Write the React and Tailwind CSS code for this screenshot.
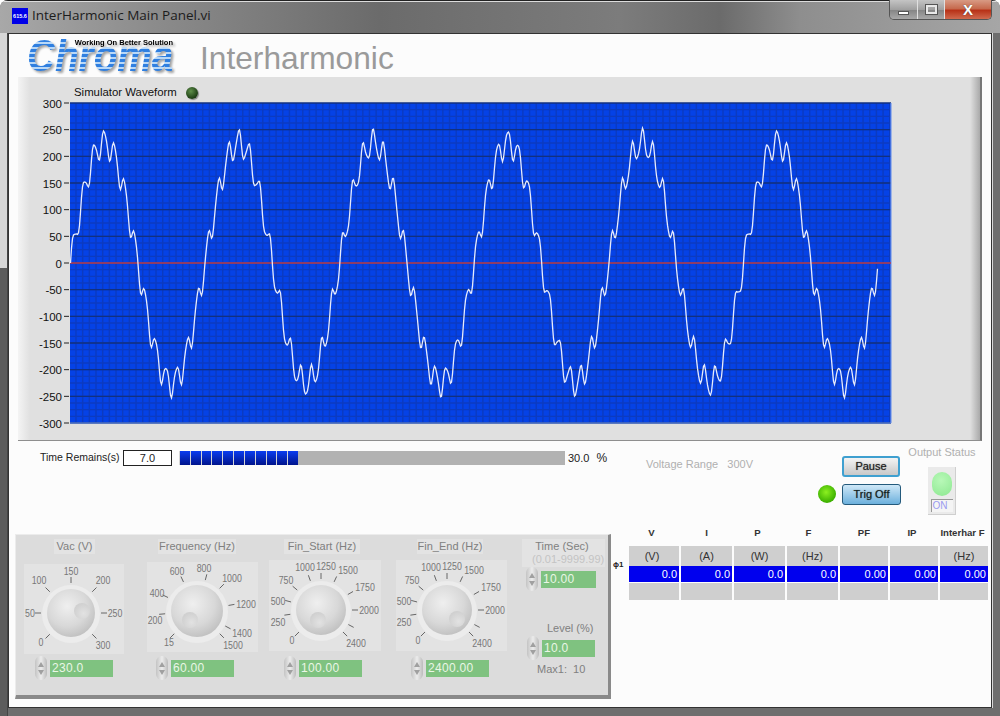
import React from 'react';

const sans = "font-['Liberation_Sans',Arial,sans-serif]";

// plot area inside the chart svg
const PLOT = { x: 52, y: 8, w: 821, h: 320 };

const wavePoints = () => {
    const pts = [];
    const period = 134.6;
    const mid = PLOT.y + PLOT.h / 2;
    for (let px = 0; px <= 807; px++) {
        const t = (px / period) * Math.PI * 2;
        const v = 225 * Math.sin(t) + 24 * Math.sin(13 * t) + 4 * Math.sin(26.4 * t);
        const y = mid - v * (PLOT.h / 600);
        pts.push(`${PLOT.x + 0.5 + px},${y.toFixed(1)}`);
    }
    return pts.join(' ');
};

const Chart = () => {
    const minorV = [];
    for (let x = PLOT.x + 6; x < PLOT.x + PLOT.w; x += 6.67) minorV.push(x);
    const minorH = [];
    for (let i = 1; i < 48; i++) minorH.push(PLOT.y + (i * PLOT.h) / 48);
    const ticks = [300, 250, 200, 150, 100, 50, 0, -50, -100, -150, -200, -250, -300];
    return (
        <svg width="875" height="340" className="block relative -mt-[8px]">
            <rect x={PLOT.x} y={PLOT.y} width={PLOT.w} height={PLOT.h} fill="#0542e6" />
            {minorV.map((x) => (
                <line key={x} x1={x} x2={x} y1={PLOT.y} y2={PLOT.y + PLOT.h} stroke="#0c3bc0" strokeWidth="1.4" />
            ))}
            {minorH.map((y) => (
                <line key={y} x1={PLOT.x} x2={PLOT.x + PLOT.w} y1={y} y2={y} stroke="#0c3bc0" strokeWidth="1.4" />
            ))}
            {ticks.map((t, i) => {
                const y = PLOT.y + (i * PLOT.h) / 12;
                return (
                    <g key={t}>
                        <line x1={PLOT.x} x2={PLOT.x + PLOT.w} y1={y} y2={y} stroke="#12307f" strokeWidth="1.3" />
                        <line x1={46} x2={51} y1={y} y2={y} stroke="#222" strokeWidth="1" />
                        <text x={44} y={y + 4.5} textAnchor="end" fontSize="11.5" fill="#111" fontFamily="Liberation Sans">
                            {t}
                        </text>
                    </g>
                );
            })}
            <line x1={PLOT.x + PLOT.w} x2={PLOT.x + PLOT.w} y1={PLOT.y} y2={PLOT.y + PLOT.h} stroke="#6f94ea" strokeWidth="1.2" />
            <line x1={PLOT.x} x2={PLOT.x + PLOT.w} y1={PLOT.y + PLOT.h} y2={PLOT.y + PLOT.h} stroke="#6f94ea" strokeWidth="1.2" />
            <line x1={PLOT.x} x2={PLOT.x + PLOT.w} y1={PLOT.y + PLOT.h / 2} y2={PLOT.y + PLOT.h / 2} stroke="#b8405a" strokeWidth="1.3" />
            <polyline points={wavePoints()} fill="none" stroke="#e8ecfc" strokeWidth="1.3" />
        </svg>
    );
};

const polar = (cx, cy, r, deg) => {
    const a = (deg * Math.PI) / 180;
    return [cx + r * Math.sin(a), cy - r * Math.cos(a)];
};

const Dial = ({ id, w, h, cx, cy, r, dimple, ticks, labels }) => (
    <svg width={w} height={h} className="block bg-[#e3e3e3] overflow-visible">
        <defs>
            <radialGradient id={id} cx="42%" cy="36%" r="70%">
                <stop offset="0%" stopColor="#efefef" />
                <stop offset="60%" stopColor="#d8d8d8" />
                <stop offset="100%" stopColor="#bdbdbd" />
            </radialGradient>
            <radialGradient id={`${id}d`} cx="60%" cy="65%" r="70%">
                <stop offset="0%" stopColor="#e2e2e2" />
                <stop offset="100%" stopColor="#cecece" />
            </radialGradient>
        </defs>
        {ticks.map((deg) => {
            const [x1, y1] = polar(cx, cy, r + 6, deg);
            const [x2, y2] = polar(cx, cy, r + 12, deg);
            return <line key={deg} x1={x1} y1={y1} x2={x2} y2={y2} stroke="#666" strokeWidth="1" />;
        })}
        <circle cx={cx} cy={cy + 1} r={r + 5} fill="#ececec" />
        <circle cx={cx} cy={cy} r={r} fill={`url(#${id})`} />
        <circle cx={dimple[0]} cy={dimple[1]} r="8" fill={`url(#${id}d)`} />
        {labels.map(([t, x, y]) => (
            <text
                key={t}
                x={x}
                y={y + 4}
                textAnchor="middle"
                fontSize="10.5"
                textLength={t.length * 4.9}
                lengthAdjust="spacingAndGlyphs"
                fill="#777"
                fontFamily="Liberation Sans"
            >
                {t}
            </text>
        ))}
    </svg>
);

const Numeric = ({ value, w, className = '' }) => (
    <div className={`flex items-center ${className}`}>
        <div className="w-[12px] h-[24px] rounded-[6px] bg-[linear-gradient(to_right,#c4c4c4,#ececec,#bcbcbc)] flex flex-col items-center justify-center gap-[3px]">
            <div className="w-0 h-0 border-x-[3px] border-x-transparent border-b-[5px] border-b-[#a0a0a0]" />
            <div className="w-0 h-0 border-x-[3px] border-x-transparent border-t-[5px] border-t-[#a0a0a0]" />
        </div>
        <div
            className={`ml-[3px] h-[17px] bg-[#7fc280] text-[#e9f6e6] text-[12px] leading-[17px] pl-[2px] tracking-[0.3px] ${w}`}
        >
            {value}
        </div>
    </div>
);

const knobs = [
    {
        id: 'k1', title: 'Vac (V)', titleW: 'w-[41px] ml-[30px]', value: '230.0', gap: 'mt-[10px]', numGap: 'mt-[2px] ml-[11px]', col: 'w-[100px]', w: 100, h: 90, cx: 47, cy: 49, r: 24, dimple: [58, 47],
        ticks: [-135, -90, -45, 0, 45, 90, 135],
        labels: [['150', 47, 7], ['100', 15, 16], ['200', 79, 16], ['50', 6, 49], ['250', 91, 49], ['0', 17, 78], ['300', 79, 81]],
    },
    {
        id: 'k2', title: 'Frequency (Hz)', titleW: 'w-[78px] ml-[11px]', value: '60.00', gap: 'mt-[8px]', numGap: 'mt-[4px] ml-[9px]', col: 'w-[111px] ml-[23px]', w: 111, h: 90, cx: 50, cy: 49, r: 26, dimple: [43, 58],
        ticks: [-135, -95, -65, -25, 15, 45, 80, 118, 135],
        labels: [['600', 30, 9], ['800', 57, 6], ['1000', 85, 16], ['400', 10, 31], ['1200', 99, 42], ['200', 8, 58], ['1400', 95, 71], ['15', 22, 80], ['1500', 86, 83]],
    },
    {
        id: 'k3', title: 'Fin_Start (Hz)', titleW: 'w-[76px] ml-[15px]', value: '100.00', gap: 'mt-[6px]', numGap: 'mt-[5px] ml-[15px]', col: 'w-[112px] ml-[11px]', w: 112, h: 91, cx: 52, cy: 50, r: 25, dimple: [49, 60],
        ticks: [-135, -98, -75, -50, -20, 0, 25, 60, 90, 118, 135],
        labels: [['1000', 36, 7], ['1250', 57, 6], ['1500', 79, 10], ['750', 17, 20], ['1750', 96, 27], ['500', 9, 41], ['2000', 100, 50], ['250', 9, 62], ['0', 23, 80], ['2400', 87, 83]],
    },
    {
        id: 'k4', title: 'Fin_End (Hz)', titleW: 'w-[66px] ml-[21px]', value: '2400.00', gap: 'mt-[6px]', numGap: 'mt-[5px] ml-[15px]', col: 'w-[111px] ml-[15px]', w: 111, h: 91, cx: 51, cy: 50, r: 25, dimple: [61, 59],
        ticks: [-135, -98, -75, -50, -20, 0, 25, 60, 90, 118, 135],
        labels: [['1000', 35, 7], ['1250', 56, 6], ['1500', 78, 10], ['750', 16, 20], ['1750', 95, 27], ['500', 8, 41], ['2000', 99, 50], ['250', 8, 62], ['0', 22, 80], ['2400', 86, 83]],
    },
];

const KnobColumn = ({ k }) => (
    <div className={`flex flex-col ${k.col}`}>
        <div className={`h-[15px] ${k.titleW} bg-[#e3e3e3] text-[11px] leading-[15px] whitespace-nowrap text-[#808080] flex justify-center`}>
            {k.title}
        </div>
        <div className={k.gap}>
            <Dial {...k} />
        </div>
        <Numeric value={k.value} w="w-[63px]" className={k.numGap} />
    </div>
);

const columns = [
    { h: 'V', unit: '(V)', val: '0.0', w: 'w-[50px]', hp: 'pr-[5px]' },
    { h: 'I', unit: '(A)', val: '0.0', w: 'w-[51px]', hp: '' },
    { h: 'P', unit: '(W)', val: '0.0', w: 'w-[51px]', hp: 'pr-[4px]' },
    { h: 'F', unit: '(Hz)', val: '0.0', w: 'w-[51px]', hp: 'pr-[8px]' },
    { h: 'PF', unit: '', val: '0.00', w: 'w-[48px]', hp: '' },
    { h: 'IP', unit: '', val: '0.00', w: 'w-[48px]', hp: 'pr-[4px]' },
    { h: 'Interhar F', unit: '(Hz)', val: '0.00', w: 'w-[48px]', hp: 'pr-[3px]' },
];

export default function App() {
    return (
        <div className={`w-[1000px] h-[716px] overflow-hidden flex flex-col rounded-t-[8px] bg-[#6e6e6e] ${sans}`}>
            {/* title bar */}
            <div className="h-[33px] shrink-0 flex items-start justify-between pl-[12px] pr-[8px] shadow-[inset_0_1px_0_#222,inset_0_2px_0_#dcdcdc] bg-[linear-gradient(90deg,#a8a8a8_0%,#8c8c8c_15%,#6b6b6b_38%,#7c7c7c_62%,#6b6b6b_72%,#8e8e8e_80%,#a6a6a6_100%)]">
                <div className="flex items-center h-[33px] -mt-[1px]">
                    <div className="w-[16px] h-[16px] bg-[#0000e8] text-white text-[5.5px] font-bold leading-[16px] text-center overflow-hidden">615.6</div>
                    <span className="ml-[4px] text-[13.5px] text-[#1c1c1c] font-['Open_Sans',sans-serif]">InterHarmonic Main Panel.vi</span>
                </div>
                <div className="flex h-[20px] rounded-b-[5px] overflow-hidden border border-t-0 border-[#555]">
                    <div className="w-[28px] bg-[linear-gradient(to_bottom,#c4c4c4,#a0a0a0_50%,#868686_55%,#a8a8a8)] border-r border-[#e0e0e0] flex items-center justify-center">
                        <div className="w-[11px] h-[4px] mt-[6px] bg-white border border-[#555]" />
                    </div>
                    <div className="w-[27px] bg-[linear-gradient(to_bottom,#c4c4c4,#a0a0a0_50%,#868686_55%,#a8a8a8)] border-r border-[#e0e0e0] flex items-center justify-center">
                        <div className="w-[11px] h-[9px] border-2 border-[#e8e8e8] outline outline-[#555]" />
                    </div>
                    <div className="w-[46px] bg-[linear-gradient(to_bottom,#d89a84,#c66a4e_45%,#b83218_55%,#d06a4e)] flex items-center justify-center">
                        <span className="text-white font-bold text-[15px] leading-none [text-shadow:0_0_1px_#333]">X</span>
                    </div>
                </div>
            </div>

            <div className="flex-1 flex pb-[8px]">
                {/* window frame, left side */}
                <div className="w-[8px] shrink-0 -mb-[8px] border-r border-[#444] bg-[linear-gradient(to_bottom,#d6d6d6_235px,#5c5c5c_235px)]" />

                {/* panel */}
                <div className="flex-1 bg-[#fcfcfc] border border-[#333] flex flex-col">
                    {/* logo row */}
                    <div className="h-[43px] shrink-0 flex items-center pl-[16px]">
                        <div className="w-[150px] h-[38px] relative drop-shadow-[2px_2px_1px_rgba(0,0,0,0.35)]">
                            <span className="absolute left-[2px] top-[-3px] text-[44px] leading-[44px] font-bold italic text-transparent bg-clip-text bg-[repeating-linear-gradient(to_bottom,#2f7fe0_0px,#2f7fe0_3px,#b8d8f8_3px,#b8d8f8_5px)] origin-left scale-x-[0.88] whitespace-nowrap">Chroma</span>
                            <span className="absolute right-[2px] top-0 text-[7.5px] font-bold text-black whitespace-nowrap">Working On Better Solution</span>
                        </div>
                        <span className="ml-[25px] text-[31.7px] leading-none mt-[7px] text-[#9a9a9a]">Interharmonic</span>
                    </div>

                    {/* graph */}
                    <div className="h-[364px] shrink-0 ml-[9px] mr-[9px] bg-[linear-gradient(to_right,#f4f4f4_0px,#e0e0e0_12px,#e0e0e0_952px,#a4a4a4_963px)] border-b border-[#8e8e8e] border-r-2 border-r-[#777]">
                        <div className="h-[26px] flex items-center pl-[56px] pt-[5px] relative z-10">
                            <span className="text-[11.4px] text-[#111]">Simulator Waveform</span>
                            <div className="ml-[9px] w-[12px] h-[12px] rounded-full bg-[radial-gradient(circle_at_40%_35%,#5f8f4a,#1c3d14_70%)] shadow-[1px_1px_1px_#888]" />
                        </div>
                        <Chart />
                    </div>

                    <div className="flex-1 flex">
                        {/* left: time + knobs */}
                        <div className="w-[603px] shrink-0 flex flex-col">
                            <div className="h-[16px] mt-[9px] flex items-center pl-[31px] text-[11px] text-[#222]">
                                <span className="w-[83px] whitespace-nowrap text-[10.5px]">Time Remains(s)</span>
                                <div className="w-[49px] h-[16px] border border-[#222] bg-white text-center text-[11px] leading-[14px]">7.0</div>
                                <div className="ml-[7px] w-[386px] h-[14px] bg-[#b2b2b2] flex">
                                    <div className="w-[119px] h-full flex gap-[1px] pl-[1px] bg-[#d4d4d4]">
                                        {Array.from({ length: 11 }).map((_, i) => (
                                            <div key={i} className="flex-1 bg-[linear-gradient(to_bottom,#0a3cf0,#00148c)]" />
                                        ))}
                                    </div>
                                </div>
                                <span className="ml-[3px]">30.0</span>
                                <span className="ml-[7px] text-[12px]">%</span>
                            </div>

                            <div className="mt-[68px] ml-[6px] w-[596px] h-[165px] bg-[#dcdcdc] border-t border-l border-t-[#ececec] border-l-[#ececec] border-b-[4px] border-r-[3px] border-b-[#8a8a8a] border-r-[#8a8a8a] pt-[4px] flex">
                                <div className="flex pl-[8px]">
                                    {knobs.map((k) => (
                                        <KnobColumn key={k.id} k={k} />
                                    ))}
                                </div>
                                <div className="ml-[15px] w-[80px] flex flex-col text-[11px] text-[#808080]">
                                    <div className="bg-[#e3e3e3] h-[28px] -mr-[3px]">
                                        <div className="text-center pr-[3px] leading-[15px]">Time (Sec)</div>
                                        <div className="text-[#c4c4c4] leading-[13px] -mt-[1px] pl-[10px] whitespace-nowrap">(0.01-9999.99)</div>
                                    </div>
                                    <Numeric value="10.00" w="w-[55px]" className="ml-[4px]" />
                                    <div className="mt-[30px] pl-[25px] leading-[14px] whitespace-nowrap">Level (%)</div>
                                    <Numeric value="10.0" w="w-[53px]" className="mt-[1px] ml-[5px]" />
                                    <div className="mt-[2px] pl-[15px] leading-[14px] whitespace-pre">Max1:  10</div>
                                </div>
                            </div>
                        </div>

                        {/* right: status + table */}
                        <div className="flex-1 flex flex-col">
                            <div className="h-[84px] flex">
                                <div className="w-[206px] shrink-0 pl-[34px] pt-[15px] text-[11px] text-[#b0b0b0] whitespace-pre">Voltage Range   300V</div>
                                <div className="flex items-end mt-[15px] h-[49px]">
                                    <div className="w-[18px] h-[18px] mb-[2px] rounded-full bg-[radial-gradient(circle_at_45%_40%,#8cf020,#3cb000_70%,#cfe8c0)]" />
                                    <div className="ml-[6px] flex flex-col gap-[7px]">
                                        <button className="w-[58px] h-[21px] rounded-[3px] border-2 border-[#3fa0d0] bg-[linear-gradient(to_bottom,#f4f4f4,#c8c8c8)] text-[11px] text-[#222] [text-shadow:0_0_1px_#555]">Pause</button>
                                        <button className="w-[59px] h-[21px] rounded-[3px] border border-[#245a7c] bg-[linear-gradient(to_bottom,#cfe8f8,#6cb0dc)] text-[11px] text-[#122] [text-shadow:0_0_1px_#555]">Trig Off</button>
                                    </div>
                                </div>
                                <div className="ml-[7px] w-[68px] flex flex-col items-center">
                                    <div className="text-[11px] text-[#b0b0b0] leading-[14px] mt-[4px] whitespace-nowrap">Output Status</div>
                                    <div className="mt-[8px] w-[28px] h-[48px] bg-[#eaeaea] border-r border-b border-[#cfcfcf] flex flex-col items-center pt-[5px]">
                                        <div className="w-[20px] h-[24px] rounded-full bg-[radial-gradient(circle_at_45%_35%,#b8f8b8,#8ce890)]" />
                                        <div className="mt-[3px] w-[22px] h-[13px] bg-[#f4f4f4] border-t border-l border-[#999] text-[10px] leading-[12px] text-[#9a9af0] pl-[1px]">ON</div>
                                    </div>
                                </div>
                            </div>
                            <div className="pl-[17px] relative">
                                <div className="flex gap-[2px]">
                                    {columns.map((c) => (
                                        <div key={c.h} className={`${c.w} flex flex-col`}>
                                            <div className={`h-[15px] text-[9.6px] font-bold text-[#333] whitespace-nowrap leading-[15px] mb-[6px] flex justify-center ${c.hp}`}>{c.h}</div>
                                            <div className={`h-[20px] bg-[#cfcfcf] text-center text-[11px] text-[#333] leading-[20px] ${c.h === 'V' ? 'pr-[4px]' : ''}`}>{c.unit}</div>
                                            <div className="h-[16px] bg-[#0000ee] text-right pr-[2px] text-[11px] text-white leading-[16px]">{c.val}</div>
                                            <div className="h-[17px] mt-[1px] bg-[#cfcfcf]" />
                                        </div>
                                    ))}
                                </div>
                                <span className="absolute left-[1px] top-[34px] text-[8px] font-bold leading-[12px] text-[#222]">ϕ1</span>
                            </div>
                        </div>
                    </div>
                </div>

                {/* window frame, right side */}
                <div className="w-[8px] shrink-0 border-l border-[#d8d8d8]" />
            </div>
        </div>
    );
}
